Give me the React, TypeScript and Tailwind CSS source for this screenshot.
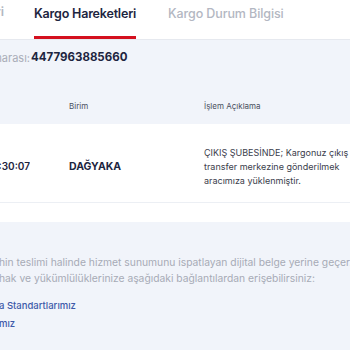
import React from 'react';

// clips text from the left so only its tail shows, ending at the box's right edge
function Tail({ width, children, className }: { width: string; children: React.ReactNode; className?: string }) {
  return (
    <div className={`${width} flex justify-end overflow-hidden shrink-0`}>
      <span className={`whitespace-nowrap ${className ?? ''}`}>{children}</span>
    </div>
  );
}

export default function App() {
  return (
    <div className="w-[350px] h-[350px] overflow-hidden bg-[#f1f4fa] font-['Inter',sans-serif]">
      {/* Tabs */}
      <div className="h-[40px] bg-white border-b border-[#e6e9ef] flex items-stretch">
        <div className="flex items-center pb-[14px]">
          <Tail width="w-[4px]" className="text-[12.5px] font-semibold text-[#b3b7c2]">
            Gönderi Bilgileri
          </Tail>
        </div>
        <div className="ml-[30px] w-[102px] flex flex-col justify-between">
          <span className="pt-[5px] text-[12.5px] font-semibold tracking-[-0.2px] text-[#1d2540] whitespace-nowrap">
            Kargo Hareketleri
          </span>
          <div className="h-[3px] bg-[#d4101f]" />
        </div>
        <div className="ml-[32px] pt-[5px] text-[12.5px] font-medium tracking-[-0.1px] text-[#b3b7c2] whitespace-nowrap">
          Kargo Durum Bilgisi
        </div>
      </div>

      {/* Tracking number */}
      <div className="h-[36px] flex items-center">
        <Tail width="w-[30px]" className="text-[11px] text-[#a9adb8]">
          Gönderi Takip Numarası:
        </Tail>
        <span className="ml-[1px] text-[11.5px] font-bold text-[#1d2540]">4477963885660</span>
      </div>

      {/* Table */}
      <div className="mt-[12px]">
        <div className="h-[36px] flex items-center text-[8px] text-[#4a5060]">
          <div className="w-[69px]" />
          <div className="w-[135px]">Birim</div>
          <div className="whitespace-nowrap">İşlem Açıklama</div>
        </div>
        <div className="bg-white">
          <div className="h-[79px] pt-[7px] flex items-center border-b border-[#eceff4]">
            <div className="w-[69px] shrink-0">
              <Tail width="w-[30px]" className="text-[10px] font-semibold text-[#1d2540]">
                24.04.2024 16:30:07
              </Tail>
            </div>
            <div className="w-[135px] shrink-0 text-[10.5px] font-bold text-[#1d2540]">DAĞYAKA</div>
            <div className="whitespace-nowrap text-[9px] leading-[14px] text-[#3b404c]">
              ÇIKIŞ ŞUBESİNDE; Kargonuz çıkış şubesinden
              <br />
              transfer merkezine gönderilmek
              <br />
              aracımıza yüklenmiştir.
            </div>
          </div>
          <div className="h-[19px]" />
        </div>
      </div>

      {/* Footer note */}
      <div className="pt-[32px] -ml-[1px] whitespace-nowrap">
        <p className="text-[10.3px] leading-[16px] text-[#a7abb6]">
          hin teslimi halinde hizmet sunumunu ispatlayan dijital belge yerine geçer.
        </p>
        <p className="text-[10.3px] leading-[16px] text-[#a7abb6]">
          hak ve yükümlülüklerinize aşağıdaki bağlantılardan erişebilirsiniz:
        </p>
        <div className="mt-[14px] flex flex-col gap-[6px] text-[9.5px] leading-[12px] font-medium text-[#3d5aa9]">
          <a>a Standartlarımız</a>
          <a>mız</a>
        </div>
      </div>
    </div>
  );
}
